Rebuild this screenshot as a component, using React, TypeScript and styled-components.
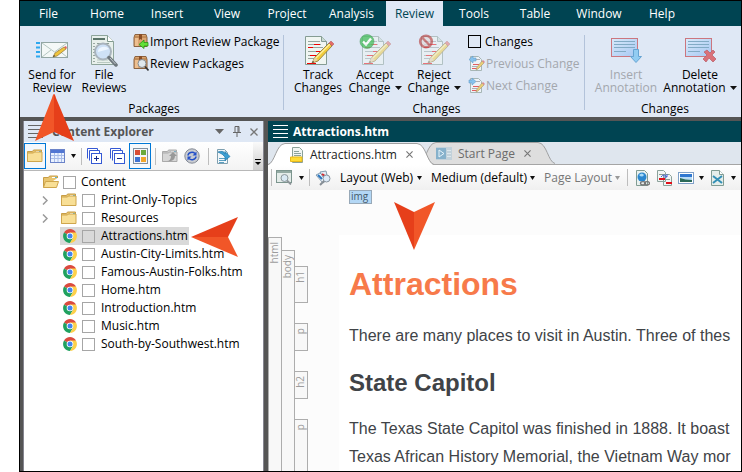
import React from "react";
import styled, { createGlobalStyle, css } from "styled-components";

const teal = "#004452";
const ribbonBg = "#dfe8f5";
const frameGray = "#555555";
const uiFont = `"Open Sans", "Noto Sans", sans-serif`;

const Global = createGlobalStyle`
  *, *::before, *::after { box-sizing: border-box; }
  html, body { margin: 0; height: 100%; background: #fff; }
  #root { height: 100%; }
  body { font-family: ${uiFont}; font-size: 12px; color: #000; }
  button, input, select { font: inherit; color: inherit; margin: 0; }
  button { border: 0; padding: 0; background: none; }
  svg { display: block; flex: none; }
`;

/* ---------- frame ---------- */
const Frame = styled.div`
  position: relative;
  height: 100vh;
  margin-left: 19px;
  border: 1px solid #000;
  background: ${frameGray};
  display: flex;
  flex-direction: column;
  overflow: hidden;
`;

const Menu = styled.nav`
  display: flex;
  flex: none;
  height: 25px;
  background: ${teal};
`;

const MenuTab = styled.button<{ $w: number; $active?: boolean }>`
  width: ${(p) => p.$w}px;
  flex: none;
  height: 25px;
  color: #fff;
  line-height: 24px;
  ${(p) => p.$active && css`background: ${ribbonBg}; color: ${teal};`}
`;

/* ---------- ribbon ---------- */
const Ribbon = styled.div`
  display: flex;
  flex: none;
  height: 91px;
  background: ${ribbonBg};
`;

const Group = styled.section<{ $w?: number }>`
  position: relative;
  display: flex;
  flex-direction: column;
  flex: ${(p) => (p.$w ? `0 0 ${p.$w}px` : "1 0 auto")};
  &:not(:last-child)::after {
    content: "";
    position: absolute;
    right: 0;
    top: 9px;
    bottom: 7px;
    width: 1px;
    background: #b3c3da;
  }
`;

const GroupBody = styled.div<{ $pad: number }>`
  display: flex;
  height: 75px;
  padding-left: ${(p) => p.$pad}px;
`;

const GroupName = styled.div`
  padding-left: 4px;
  text-align: center;
  line-height: 16px;
`;

const BigButton = styled.button<{ $w: number }>`
  width: ${(p) => p.$w}px;
  flex: none;
  display: flex;
  flex-direction: column;
  align-items: center;
  padding-top: 6px;
  line-height: 13px;
  white-space: nowrap;
  &:disabled { color: #a3a7ad; }
`;

const IconSlot = styled.span`
  display: flex;
  align-items: center;
  justify-content: center;
  height: 36px;
`;

const BigLine = styled.span`
  display: flex;
  align-items: center;
  gap: 4px;
`;

const SmallStack = styled.div<{ $gap: number }>`
  display: flex;
  flex-direction: column;
  padding-top: 4px;
  padding-left: ${(p) => p.$gap}px;
`;

const SmallButton = styled.button`
  display: flex;
  align-items: center;
  gap: 1px;
  height: 22px;
  white-space: nowrap;
  &:disabled { color: #a3a7ad; }
`;

const ChangesLabel = styled.label`
  display: flex;
  align-items: center;
  gap: 4px;
  height: 22px;
`;

const Check = styled.input.attrs({ type: "checkbox" })<{ $line?: string }>`
  appearance: none;
  flex: none;
  width: 13px;
  height: 13px;
  border: 1px solid ${(p) => p.$line ?? "#a6a6a6"};
  background: transparent;
`;

/* ---------- work area ---------- */
const Work = styled.div`
  display: flex;
  flex: 1;
  min-height: 0;
  padding: 4px 0 0 3px;
  gap: 4px;
`;

const Explorer = styled.aside`
  display: flex;
  flex-direction: column;
  flex: 0 0 241px;
  background: #fff;
  border: solid #85858f;
  border-width: 0 1px;
`;

const ExplorerHead = styled.header`
  display: flex;
  align-items: center;
  height: 21px;
  padding: 0 5px 0 4px;
  gap: 9px;
  background: ${ribbonBg};
  color: #555;
  h2 {
    margin: 0 auto 0 0;
    font-size: 12px;
    line-height: 20px;
    white-space: nowrap;
  }
`;

const ExplorerTools = styled.div`
  display: flex;
  align-items: center;
  height: 29px;
  flex: none;
  background: linear-gradient(#fff, #f3f3f3);
  border-bottom: 1px solid #b8b8b8;
`;

const ToolButton = styled.button<{ $w?: number; $on?: boolean }>`
  display: flex;
  align-items: center;
  justify-content: center;
  flex: none;
  width: ${(p) => p.$w ?? 22}px;
  height: 26px;
  ${(p) => p.$on && css`border: 1px solid #0078d7; background: #f4f8fc;`}
`;

const Divider = styled.span<{ $m?: string }>`
  flex: none;
  width: 1px;
  height: 17px;
  margin: ${(p) => p.$m ?? "0"};
  background: #bdbdbd;
`;

const Overflow = styled.button`
  align-self: stretch;
  display: flex;
  align-items: flex-end;
  justify-content: center;
  width: 10px;
  margin-left: auto;
  padding-bottom: 4px;
  background: linear-gradient(#fafafa, #cfcfcf);
`;

const Tree = styled.ul`
  list-style: none;
  margin: 0;
  padding: 2px 0 0;
`;

const TreeRow = styled.li<{ $depth: number; $selected?: boolean }>`
  display: flex;
  align-items: center;
  height: 18px;
  padding-left: 18px;
  label {
    display: flex;
    align-items: center;
    height: 18px;
    gap: ${(p) => (p.$depth ? 5 : 4)}px;
    padding: 0 1px;
    line-height: 18px;
    white-space: nowrap;
    ${(p) => p.$selected && css`background: #d9d9d9;`}
  }
`;

const Twisty = styled.button`
  width: 18px;
  height: 18px;
  flex: none;
  display: flex;
  align-items: center;
`;

const Spacer = styled.span<{ $w: number }>`
  width: ${(p) => p.$w}px;
  flex: none;
`;

const ItemName = styled.span`
  padding-left: 1px;
`;

/* ---------- document ---------- */
const Doc = styled.main`
  display: flex;
  flex-direction: column;
  flex: 1;
  min-width: 0;
  background: #fcfcfc;
`;

const DocTitle = styled.header`
  display: flex;
  align-items: center;
  gap: 5px;
  height: 21px;
  flex: none;
  padding-left: 5px;
  background: ${teal};
  color: #fff;
  font-weight: 700;
`;

const TabStrip = styled.div`
  display: flex;
  align-items: flex-end;
  height: 23px;
  flex: none;
  background: #dfe6ee;
  border-bottom: 1px solid #a5a5a5;
`;

const DocTab = styled.div<{ $active?: boolean }>`
  position: relative;
  z-index: ${(p) => (p.$active ? 1 : 0)};
  display: flex;
  flex: none;
  height: 22px;
  margin-bottom: ${(p) => (p.$active ? -1 : 0)}px;
  color: ${(p) => (p.$active ? "#222" : "#6b6b6b")};
  & + & { margin-left: -15px; }
`;

const TabFace = styled.div<{ $active?: boolean }>`
  display: flex;
  align-items: center;
  gap: 6px;
  padding-left: ${(p) => (p.$active ? 5 : 0)}px;
  padding-right: ${(p) => (p.$active ? 4 : 7)}px;
  border-top: 1px solid #a0a0a0;
  background: ${(p) => (p.$active ? "#fff" : "#dedede")};
  white-space: nowrap;
  button { margin-left: 3px; }
`;

const DocTools = styled.div`
  display: flex;
  align-items: center;
  height: 25px;
  flex: none;
  padding-left: 3px;
  background: linear-gradient(#fff, #f0f0f0);
  overflow: hidden;
`;

const Picker = styled.span<{ $w: number; $muted?: boolean }>`
  display: flex;
  align-items: center;
  flex: none;
  width: ${(p) => p.$w}px;
  color: ${(p) => (p.$muted ? "#777" : "#000")};
  select {
    appearance: none;
    border: 0;
    padding: 0;
    margin-right: auto;
    background: none;
    opacity: 1;
    color: inherit;
  }
`;

const Canvas = styled.div`
  position: relative;
  display: flex;
  flex: 1;
  min-height: 0;
  overflow: hidden;
`;

const Gutter = styled.div`
  display: flex;
  flex: 0 0 71px;
  padding-top: 47px;
`;

const Rail = styled.div<{ $top: number }>`
  display: flex;
  flex-direction: column;
  gap: 20px;
  margin-top: ${(p) => p.$top}px;
  width: 13px;
`;

const Block = styled.div<{ $h?: number }>`
  flex: ${(p) => (p.$h ? `0 0 ${p.$h}px` : "1")};
  width: 14px;
  padding-top: 4px;
  border: 1px solid #adadad;
  border-bottom-width: ${(p) => (p.$h ? 1 : 0)}px;
  background: #f8f8f8;
  color: #9c9c9c;
  font-size: 10px;
  line-height: 11px;
  span {
    display: block;
    writing-mode: vertical-rl;
    transform: rotate(180deg);
  }
`;

const Page = styled.article`
  flex: 1;
  min-width: 0;
  margin-top: 45px;
  padding-left: 10px;
  background: #fff;
  color: #404347;
  font-family: "Liberation Sans", Arial, sans-serif;
  font-size: 16px;
  line-height: 28px;
  white-space: nowrap;
  overflow: hidden;
  h1 {
    margin: 29px 0 0;
    font-size: 32px;
    line-height: 40px;
    color: #f77a4a;
  }
  h2 {
    margin: 19px 0 0;
    font-size: 24px;
    line-height: 28px;
  }
  p { margin: 18px 0 0; }
`;

const ImgTag = styled.span`
  position: absolute;
  left: 81px;
  top: 0;
  width: 23px;
  height: 14px;
  border: 1px solid #98a9b8;
  background: #b3d7f5;
  color: #44576a;
  font-size: 10px;
  line-height: 11px;
  padding-left: 1px;
`;

const Pointer = styled.svg<{ $x: number; $y: number }>`
  position: absolute;
  left: ${(p) => p.$x}px;
  top: ${(p) => p.$y}px;
  z-index: 5;
  pointer-events: none;
`;

/* ---------- icons ---------- */
const Caret = ({ c = "#111", w = 7 }: { c?: string; w?: number }) => (
  <svg width={w} height={w > 7 ? 5 : 4} viewBox="0 0 7 4" preserveAspectRatio="none"><path d="M0 0h7L3.500 4z" fill={c} /></svg>
);

const Burger = ({ c }: { c: string }) => (
  <svg width="15" height="13"><path d="M0 .5h15M0 4.500h15M0 8.500h15M0 12.500h15" stroke={c} /></svg>
);

const Cross = ({ s = 7, c = "#777" }: { s?: number; c?: string }) => (
  <svg width={s} height={s} viewBox="0 0 8 8"><path d="M.5.5l7 7M7.500.5l-7 7" stroke={c} strokeWidth="1.300" /></svg>
);

const Pencil = () => (
  <g>
    <path d="M10 29l3-6L27 9l3 3-14 15z" fill="#f1cd3c" stroke="#85713a" strokeWidth=".8" />
    <path d="M14 24L28 10" stroke="#fff0a0" strokeWidth="1.200" />
    <path d="M27 9l2-2 3 3-2 2z" fill="#e46b68" stroke="#a55" strokeWidth=".5" />
    <path d="M10 29l3-6 3 3z" fill="#ead2a0" /><path d="M10 29l1-2 1 1z" fill="#222" />
  </g>
);

const ChangeIcon = ({ kind }: { kind: "track" | "accept" | "reject" }) => (
  <svg width="33" height="33" viewBox="0 0 33 33">
    <g opacity={kind === "track" ? 1 : 0.5}>
      <path d="M3.500 2.500h16l5 5v23h-21z" fill="#f0f6f2" stroke="#859c93" />
      <path d="M19.500 2.500v5h5" fill="#cadbd4" stroke="#859c93" />
      <path d="M6 7.500h12M6 10.500h13M11 13.500h10M6 17.500h12M6 21.500h8M6 24.500h7" stroke="#98a6a0" />
      <path d="M12 10.500h6M6 13.500h5M14 17.500h5M8 21.500h7M5 29.500h9" stroke="#f00000" />
      <Pencil />
    </g>
    {kind === "accept" && <g opacity=".75"><circle cx="8" cy="7.500" r="7" fill="#44bd5b" stroke="#368f49" strokeWidth=".6" /><path d="M4 7.500l3 3 5-6" fill="none" stroke="#fff" strokeWidth="2.400" /></g>}
    {kind === "reject" && <g opacity=".65"><circle cx="8" cy="7.500" r="5.800" fill="#ddd9dc" stroke="#b84141" strokeWidth="2.600" /><path d="M4 3.500l8 8" stroke="#b84141" strokeWidth="2.400" /></g>}
  </svg>
);

const SendIcon = () => (
  <svg width="34" height="20" viewBox="0 0 34 20">
    <path d="M1 3h4M1 7.500h4M1 12h4M1 16.500h4" stroke="#2da8ef" strokeWidth="2" />
    <rect x="6.500" y="2.500" width="26" height="15" fill="#f4f8f7" stroke="#93a6a3" />
    <path d="M7 17l9-7M32 17l-9-7M7 3l12.500 9L32 3" fill="none" stroke="#b4c6c2" />
    <path d="M18 17l2-4 9-6 2 2-9 7z" fill="#efc43c" stroke="#92753a" strokeWidth=".7" />
    <path d="M29 7l2-1 1 2-1 1z" fill="#df6562" /><path d="M18 17l1-2 1 1z" fill="#333" />
  </svg>
);

const FileReviewIcon = () => (
  <svg width="28" height="33" viewBox="0 0 28 33">
    <path d="M1.500 1.500h16l6 6v23h-22z" fill="#e8f0ec" stroke="#8ea59b" />
    <path d="M17.500 1.500v6h6" fill="#fff" stroke="#829b90" />
    <path d="M3 5h12" stroke="#5b7569" strokeWidth="2" />
    <path d="M7 9.500h12" stroke="#8da096" />
    <path d="M4 9v20" stroke="#4d6158" strokeDasharray="1 2" />
    <path d="M7 26h11M7 28.500h13" stroke="#b9c9c1" />
    <circle cx="13" cy="17.500" r="8" fill="#cee1f6" stroke="#a9b4bd" strokeWidth="2" />
    <path d="M8 18a6 5 0 0 1 11-3z" fill="#edf6ff" />
    <path d="M19 23.500l7 7.500" stroke="#6f787e" strokeWidth="3.500" strokeLinecap="round" />
    <path d="M20 24l5.500 6" stroke="#bfc7cb" />
  </svg>
);

const PackageIcon = ({ find }: { find?: boolean }) => (
  <svg width="16" height="16" viewBox="0 0 16 16">
    <path d="M2 1.500h11l1 3v9H1v-9z" fill="#dca572" stroke="#8a6240" />
    <path d="M1 4h13" stroke="#a8723f" /><path d="M6 1h3v6l-1.500-1L6 7z" fill="#8b4e25" />
    <path d="M2 5h3v8H2z" fill="#edbf90" />
    {find
      ? <g><circle cx="9" cy="8.500" r="4" fill="#e0e8ed" stroke="#858b90" /><path d="M12 11.500l3.500 4" stroke="#333" strokeWidth="1.600" /></g>
      : <path d="M15 9.500h-4V7l-5 4.500 5 4v-2.500h4z" fill="#62e039" stroke="#269416" strokeWidth=".8" />}
  </svg>
);

const StepIcon = ({ next }: { next?: boolean }) => (
  <svg width="17" height="17" viewBox="0 0 17 17" opacity=".7">
    <path d="M2.500 1.500h8l3 3v11h-11z" fill="#f4f7f8" stroke="#8fa19b" />
    <path d="M8 4.500h4M4 11.500h5" stroke="#999" /><path d="M5 9.500h6M4 13.500h5" stroke="#e32222" />
    <path d="M8 15l1-3 5-6 2 2-6 6z" fill="#edc544" stroke="#92743a" strokeWidth=".6" /><path d="M14 6l1-1 2 2-1 1z" fill="#dd6060" />
    <path d={next ? "M1 3h3V1l4 3.500L4 8V6H1z" : "M8 3H5V1L1 4.500 5 8V6h3z"} fill="#62b4ea" stroke="#327ebb" strokeWidth=".6" />
  </svg>
);

const NoteIcon = ({ del }: { del?: boolean }) => (
  <svg width="32" height="26" viewBox="0 0 32 26">
    <defs><linearGradient id="note" x2="1" y2="1"><stop stopColor="#d9eafa" /><stop offset="1" stopColor="#a6c7f2" /></linearGradient></defs>
    <rect x="1.500" y="1.500" width="26" height="18" fill="url(#note)" stroke="#cc767e" />
    <path d="M4 4.500h21M4 7.500h21M4 10.500h21M4 14.500h12" stroke="#82abc5" />
    {del
      ? <path d="M20 15l3-2 3 3 3-3 2 2-3 3 4 4-3 3-4-4-3 4-3-3 4-4z" fill="#da7078" stroke="#b85c66" strokeWidth=".7" />
      : <path d="M23.500 12.500h5v7h3l-5.500 6-5.500-6h3z" fill="#92ccf2" stroke="#67a4d3" />}
  </svg>
);

const Folder = ({ open, gray }: { open?: boolean; gray?: boolean }) => (
  <svg width="16" height="14" viewBox="0 0 16 14">
    <path d="M.5 12.500v-10h5l1-1.500h8v2" fill={gray ? "#ccc" : "#e8c56f"} stroke={gray ? "#aaa" : "#c79d46"} />
    <path d="M9 2.500h5" stroke="#fff" />
    <path d="M12 2.500h2" stroke="#55b5dd" />
    <path d={open ? "M.5 12.500l2-6h13l-2 6z" : "M.5 12.500V4h6l1-1h7.500v9.500z"} fill={gray ? "#d6d6d6" : "#f8df96"} stroke={gray ? "#aaa" : "#cfa64d"} />
    {gray && <path d="M5 12q4 0 4-5H7l4-4 4 4h-2q0 6-8 5z" fill="#999" />}
  </svg>
);

const Chrome = () => (
  <svg width="16" height="16" viewBox="-2 -1 16 16" overflow="visible">
    <path d="M7 7L1 3.500A7 7 0 0 1 13 3.500z" fill="#db4a3f" />
    <path d="M7 7L1 3.500A7 7 0 0 0 7 14l3-5z" fill="#20a15f" />
    <path d="M7 7l3 2-3 5A7 7 0 0 0 13 3.500H7z" fill="#fdd04b" />
    <circle cx="7" cy="7" r="3.300" fill="#fff" /><circle cx="7" cy="7" r="2.500" fill="#4385f0" />
  </svg>
);

const GridIcon = () => (
  <svg width="15" height="14" viewBox="0 0 15 14">
    <rect x=".5" y=".5" width="14" height="13" fill="#eaf2ff" stroke="#6b83c8" /><path d="M1 1h13v3H1z" fill="#5277d3" />
    <path d="M1 6.500h13M1 9.500h13M4.500 4v9M8 4v9M11.500 4v9" stroke="#a9bde9" />
  </svg>
);

const StackIcon = ({ plus }: { plus?: boolean }) => (
  <svg width="16" height="16" viewBox="0 0 16 16">
    <g fill="#fff" stroke="#3559d4"><path d="M.5 10.500V.5h10v3" /><path d="M2.500 12.500v-10h10v3" /><rect x="4.500" y="5.500" width="10" height="10" /></g>
    <path d={plus ? "M7 10.500h5M9.500 8v5" : "M7 10.500h5"} stroke="#152a8c" />
  </svg>
);

const TilesIcon = () => (
  <svg width="15" height="16" viewBox="0 0 15 16">
    <rect x=".5" y=".5" width="14" height="15" fill="#f4f5fa" stroke="#8090a0" />
    <rect x="2" y="2" width="5" height="5" fill="#d94d35" /><rect x="8" y="2" width="5" height="5" fill="#6aaa3c" />
    <rect x="2" y="9" width="5" height="5" fill="#3f73d2" /><rect x="8" y="9" width="5" height="5" fill="#f0a62c" />
  </svg>
);

const SyncIcon = () => (
  <svg width="16" height="16" viewBox="0 0 16 16">
    <circle cx="8" cy="8" r="7.200" fill="#c9ccd2" stroke="#858b96" />
    <path d="M4 7.500a4 3.500 0 0 1 7-2M12 8.500a4 3.500 0 0 1-7 2" fill="none" stroke="#2450c8" strokeWidth="1.600" />
    <path d="M12.500 3.500v4h-4zM3.500 12.500v-4h4z" fill="#2450c8" />
  </svg>
);

const ExportIcon = () => (
  <svg width="15" height="17" viewBox="0 0 15 17">
    <path d="M1.500 1.500h7l3 3v11h-10z" fill="#f2f7fa" stroke="#7fa0b0" /><path d="M3 10.500h7M3 12.500h7M3 14.500h5" stroke="#5b9fc0" />
    <path d="M2 4q6-2 7 2V3.500l5 5-5 4V9Q7 6 2 4z" fill="#3a9ed2" stroke="#2479a9" strokeWidth=".7" />
  </svg>
);

const PageIcon = () => (
  <svg width="14" height="16" viewBox="0 0 14 16">
    <path d="M2.500.5h7l3 3v12h-10z" fill="#f0f5f2" stroke="#8aa198" /><path d="M4 4.500h5M4 6.500h7M4 8.500h7" stroke="#8ba39b" />
    <path d="M.5 10h11.500v4.500H.5z" fill="#ffdc33" stroke="#e7b81c" />
  </svg>
);

const StartIcon = () => (
  <svg width="16" height="13" viewBox="0 0 16 13"><rect width="16" height="13" fill="#c2d1da" /><rect y="1" width="10" height="11" fill="#86b1cb" /><path d="M3 3l5 3.500L3 10z" fill="none" stroke="#e7f4fb" /><path d="M11 3.500h4M11 6.500h4M11 9.500h4" stroke="#dde8ee" /></svg>
);

const PreviewIcon = () => (
  <svg width="17" height="15" viewBox="0 0 17 15"><rect x=".5" y=".5" width="15" height="12" fill="#e4ece9" stroke="#7c958e" /><path d="M1 2h14" stroke="#93aaa3" strokeWidth="2" /><circle cx="8.500" cy="8" r="3.500" fill="#d9e9f3" stroke="#8c979c" /><path d="M11 10.500l4 4" stroke="#8d9599" strokeWidth="1.800" /></svg>
);

const TagFindIcon = () => (
  <svg width="17" height="16" viewBox="0 0 17 16"><path d="M1 5l4-2 7 7-4 3z" fill="#f0f5fb" stroke="#839cb0" /><path d="M5 2l6-1 1 4-4 2z" fill="#e6edf4" stroke="#839cb0" /><path d="M3 5l4 4" stroke="#2674be" strokeWidth="2" /><path d="M7 4l3 2" stroke="#d32b31" strokeWidth="2" /><circle cx="11.500" cy="8.500" r="3.500" fill="#dceaf7" stroke="#88949f" /><path d="M9 11l-4 4" stroke="#868e95" strokeWidth="2" /></svg>
);

const LinkIcon = () => (
  <svg width="15" height="16" viewBox="0 0 15 16"><path d="M1.500.5h8l3 3v12h-11z" fill="#eaf1ef" stroke="#819c93" /><circle cx="7" cy="7" r="4.500" fill="#2b87cf" /><path d="M4 5q3-3 5 0-2 3-5 0" fill="#a7daf8" /><g fill="none" stroke="#777" strokeWidth="1.300"><ellipse cx="8" cy="13.300" rx="2.500" ry="1.700" /><ellipse cx="12" cy="13.300" rx="2.500" ry="1.700" /></g></svg>
);

const CrossRefIcon = () => (
  <svg width="17" height="16" viewBox="0 0 17 16"><path d="M1.500.5h6l2 2v9h-8zM7.500 4.500h6l2 2v9h-8z" fill="#f1f5f4" stroke="#8ba19a" /><path d="M3 4.500h5M9 9.500h5" stroke="#8b9c97" /><path d="M3 9h6M10 13h6" stroke="#e10f19" strokeWidth="2" /><path d="M5 7q3-4 6 0M11 4v3H8" fill="none" stroke="#4565d8" /></svg>
);

const PictureIcon = () => (
  <svg width="16" height="12" viewBox="0 0 16 12"><rect x=".5" y=".5" width="15" height="11" fill="#fff" stroke="#7fa0c8" /><rect x="2" y="2" width="12" height="4" fill="#2f77d0" /><rect x="2" y="5" width="12" height="3" fill="#b9dcf5" /><path d="M2 6q5 2 12 2v2H2z" fill="#2b6a58" /></svg>
);

const VarIcon = () => (
  <svg width="13" height="16" viewBox="0 0 13 16"><path d="M.5.5h8l4 4v11H.5z" fill="#e5eeeb" stroke="#819c93" /><path d="M8.500.5v4h4" fill="#fff" stroke="#819c93" /><path d="M2 6l9 7M11 6l-9 7" stroke="#3490b6" strokeWidth="2" /></svg>
);

const PinIcon = () => (
  <svg width="8" height="11" viewBox="0 0 8 11"><path d="M2 .5h4v6H2zM0 6.500h8M4 7v4M5 1v5" fill="none" stroke="#666" /></svg>
);

const TabEdge = ({ right, active }: { right?: boolean; active?: boolean }) => (
  <svg width="17" height="22" viewBox="0 0 17 22">
    <g transform={right ? "translate(17 0) scale(-1 1)" : undefined}>
      <path d="M0 22C7 21 8 1 17 .5V22z" fill={active ? "#fff" : "#dedede"} />
      <path d="M0 21.500C7 20 8 1 17 .5" fill="none" stroke="#a0a0a0" />
    </g>
  </svg>
);

/* ---------- data ---------- */
const menus: [string, number][] = [
  ["File", 57], ["Home", 60], ["Insert", 60], ["View", 60], ["Project", 60], ["Analysis", 69],
  ["Review", 57], ["Tools", 62], ["Table", 60], ["Window", 68], ["Help", 58],
];

const folders = ["Print-Only-Topics", "Resources"];
const files = [
  "Attractions.htm", "Austin-City-Limits.htm", "Famous-Austin-Folks.htm", "Home.htm",
  "Introduction.htm", "Music.htm", "South-by-Southwest.htm",
];

type BigProps = { w: number; icon: React.ReactNode; top: string; bottom: string; menu?: boolean; disabled?: boolean };
const Big = ({ w, icon, top, bottom, menu, disabled }: BigProps) => (
  <BigButton $w={w} disabled={disabled}>
    <IconSlot>{icon}</IconSlot>
    <BigLine>{top}</BigLine>
    <BigLine>{bottom}{menu && <Caret />}</BigLine>
  </BigButton>
);

export default function App() {
  return (
    <>
      <Global />
      <Frame>
        <Menu>
          {menus.map(([name, w]) => (
            <MenuTab key={name} $w={w} $active={name === "Review"}>{name}</MenuTab>
          ))}
        </Menu>

        <Ribbon>
          <Group $w={264}>
            <GroupBody $pad={4}>
              <Big w={56} icon={<SendIcon />} top="Send for" bottom="Review" />
              <Big w={48} icon={<FileReviewIcon />} top="File" bottom="Reviews" />
              <SmallStack $gap={5}>
                <SmallButton><PackageIcon />Import Review Package</SmallButton>
                <SmallButton><PackageIcon find />Review Packages</SmallButton>
              </SmallStack>
            </GroupBody>
            <GroupName>Packages</GroupName>
          </Group>
          <Group $w={301}>
            <GroupBody $pad={6}>
              <Big w={56} icon={<ChangeIcon kind="track" />} top="Track" bottom="Changes" />
              <Big w={58} icon={<ChangeIcon kind="accept" />} top="Accept" bottom="Change" menu />
              <Big w={60} icon={<ChangeIcon kind="reject" />} top="Reject" bottom="Change" menu />
              <SmallStack $gap={4}>
                <ChangesLabel><Check $line="#000" />Changes</ChangesLabel>
                <SmallButton disabled><StepIcon />Previous Change</SmallButton>
                <SmallButton disabled><StepIcon next />Next Change</SmallButton>
              </SmallStack>
            </GroupBody>
            <GroupName>Changes</GroupName>
          </Group>
          <Group>
            <GroupBody $pad={5}>
              <Big w={72} icon={<NoteIcon />} top="Insert" bottom="Annotation" disabled />
              <Big w={76} icon={<NoteIcon del />} top="Delete" bottom="Annotation" menu />
            </GroupBody>
            <GroupName>Changes</GroupName>
          </Group>
        </Ribbon>

        <Work>
          <Explorer>
            <ExplorerHead>
              <Burger c="#666" />
              <h2>Content Explorer</h2>
              <button aria-label="Panel menu"><Caret c="#666" w={9} /></button>
              <button aria-label="Pin"><PinIcon /></button>
              <button aria-label="Close panel"><Cross s={8} /></button>
            </ExplorerHead>
            <ExplorerTools>
              <ToolButton $on aria-label="Folders"><Folder /></ToolButton>
              <ToolButton aria-label="Columns"><GridIcon /></ToolButton>
              <ToolButton $w={10} aria-label="Column menu"><Caret w={5} /></ToolButton>
              <Divider $m="0 1px 0 3px" />
              <ToolButton $w={23} aria-label="Expand all"><StackIcon plus /></ToolButton>
              <ToolButton $w={23} aria-label="Collapse all"><StackIcon /></ToolButton>
              <ToolButton $on aria-label="Tiles"><TilesIcon /></ToolButton>
              <Divider $m="0 2px 0 4px" />
              <ToolButton $w={23} aria-label="Move up" disabled><Folder gray /></ToolButton>
              <ToolButton aria-label="Synchronize"><SyncIcon /></ToolButton>
              <Divider $m="0 3px 0 5px" />
              <ToolButton aria-label="Export"><ExportIcon /></ToolButton>
              <Overflow aria-label="More tools">
                <svg width="6" height="7"><path d="M0 .5h6" stroke="#000" /><path d="M0 3h6L3 6z" /></svg>
              </Overflow>
            </ExplorerTools>
            <Tree>
              <TreeRow $depth={0}>
                <label><Folder open /><Check /><ItemName>Content</ItemName></label>
              </TreeRow>
              {folders.map((f) => (
                <TreeRow key={f} $depth={1}>
                  <Twisty aria-label={`Expand ${f}`}>
                    <svg width="6" height="9"><path d="M1 .5l4 4-4 4" fill="none" stroke="#999" strokeWidth="1.500" /></svg>
                  </Twisty>
                  <label><Folder /><Check /><ItemName>{f}</ItemName></label>
                </TreeRow>
              ))}
              {files.map((f, i) => (
                <TreeRow key={f} $depth={1} $selected={i === 0}>
                  <Spacer $w={18} />
                  <label><Chrome /><Check /><ItemName>{f}</ItemName></label>
                </TreeRow>
              ))}
            </Tree>
          </Explorer>

          <Doc>
            <DocTitle><Burger c="#fff" />Attractions.htm</DocTitle>
            <TabStrip>
              <DocTab $active>
                <TabEdge active />
                <TabFace $active>
                  <PageIcon />Attractions.htm
                  <button aria-label="Close Attractions.htm"><Cross /></button>
                </TabFace>
                <TabEdge right active />
              </DocTab>
              <DocTab>
                <TabEdge />
                <TabFace>
                  <StartIcon />Start Page
                  <button aria-label="Close Start Page"><Cross /></button>
                </TabFace>
                <TabEdge right />
              </DocTab>
            </TabStrip>
            <DocTools>
              <Divider />
              <ToolButton $w={25} aria-label="Preview"><PreviewIcon /></ToolButton>
              <ToolButton $w={8} aria-label="Preview menu"><Caret w={5} /></ToolButton>
              <Divider $m="0 3px 0 4px" />
              <ToolButton $w={21} aria-label="Show tags"><TagFindIcon /></ToolButton>
              <Spacer $w={6} />
              <Picker $w={82}><select aria-label="Layout"><option>Layout (Web)</option></select><Caret w={5} /></Picker>
              <Spacer $w={9} />
              <Picker $w={104}><select aria-label="Medium"><option>Medium (default)</option></select><Caret w={5} /></Picker>
              <Spacer $w={9} />
              <Picker $w={76} $muted><select aria-label="Page layout" disabled><option>Page Layout</option></select><Caret w={5} c="#999" /></Picker>
              <Divider $m="0 3px 0 7px" />
              <ToolButton aria-label="Insert link"><LinkIcon /></ToolButton>
              <ToolButton aria-label="Insert cross-reference"><CrossRefIcon /></ToolButton>
              <ToolButton aria-label="Insert picture"><PictureIcon /></ToolButton>
              <ToolButton $w={9} aria-label="Picture menu"><Caret w={5} /></ToolButton>
              <ToolButton aria-label="Insert variable"><VarIcon /></ToolButton>
              <ToolButton $w={11} aria-label="Variable menu"><Caret w={5} /></ToolButton>
            </DocTools>
            <Canvas>
              <ImgTag>img</ImgTag>
              <Gutter>
                <Rail $top={0}><Block><span>html</span></Block></Rail>
                <Rail $top={13}><Block><span>body</span></Block></Rail>
                <Rail $top={29}>
                  <Block $h={37}><span>h1</span></Block>
                  <Block $h={28}><span>p</span></Block>
                  <Block $h={28}><span>h2</span></Block>
                  <Block><span>p</span></Block>
                </Rail>
              </Gutter>
              <Page>
                <h1>Attractions</h1>
                <p>There are many places to visit in Austin. Three of thes</p>
                <h2>State Capitol</h2>
                <p>The Texas State Capitol was finished in 1888. It boast<br />Texas African History Memorial, the Vietnam Way mor</p>
              </Page>
            </Canvas>
          </Doc>
        </Work>

        <Pointer $x={15} $y={93} width="40" height="48" viewBox="0 0 40 48">
          <path d="M19 0Q18 0 17 4L0 47 19 38z" fill="#f15628" /><path d="M19 0q1 0 2 4l18 43-20-9z" fill="#e63f1a" />
        </Pointer>
        <Pointer $x={171} $y={216} width="48" height="41" viewBox="0 0 48 41">
          <path d="M0 20L47 0 37 20z" fill="#e63f1a" /><path d="M0 20l47 20-10-20z" fill="#f15628" />
        </Pointer>
        <Pointer $x={374} $y={201} width="41" height="48" viewBox="0 0 41 48">
          <path d="M0 0l20 10v38z" fill="#e63f1a" /><path d="M41 0L20 10v38z" fill="#f15628" />
        </Pointer>
      </Frame>
    </>
  );
}
